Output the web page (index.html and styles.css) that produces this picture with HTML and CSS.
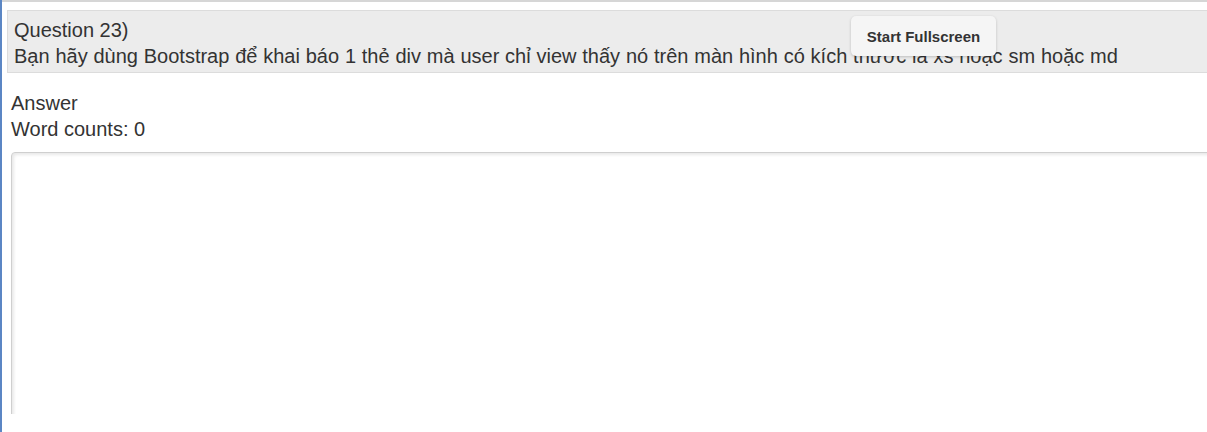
FILE: index.html
```html
<!DOCTYPE html>
<html lang="vi">
<head>
<meta charset="utf-8">
<title>Question 23</title>
<link rel="stylesheet" href="styles.css">
</head>
<body>
<div class="frame">
  <div class="inner">
    <div class="question">
      <div>Question 23)</div>
      <div class="q-text">Bạn hãy dùng Bootstrap để khai báo 1 thẻ div mà user chỉ view thấy nó trên màn hình có kích thước là xs hoặc sm hoặc md</div>
    </div>
    <div class="answer">
      <div>Answer</div>
      <div>Word counts: <span class="count">0</span></div>
      <textarea class="area"></textarea>
    </div>
  </div>
  <button class="fs-btn" type="button">Start Fullscreen</button>
</div>
</body>
</html>
```

FILE: styles.css
```css
html, body {
  margin: 0;
  padding: 0;
  height: 100%;
  background: #fff;
  overflow: hidden;
}
body {
  border-left: 2px solid #5b86c4;
  box-sizing: border-box;
  font-family: "Liberation Sans", Arial, sans-serif;
  font-size: 20px;
  line-height: 26px;
  color: #333;
}
.frame {
  position: relative;
  height: 412px;
  overflow: hidden;
  border-top: 2px solid #d6d6d6;
  width: 1260px;
}
.inner {
  padding-top: 8px;
}
.question {
  margin-left: 5px;
  background: #ececec;
  border: 1px solid #dcdcdc;
  padding: 6px 6px 3px;
}
.q-text {
  word-spacing: 0.25px;
}
.answer {
  padding: 17px 0 0 9px;
}
.area {
  display: block;
  margin-top: 10px;
  width: 1240px;
  height: 400px;
  box-sizing: border-box;
  border: 1px solid #cfcfcf;
  border-radius: 4px;
  box-shadow: inset 2px 2px 3px rgba(0, 0, 0, 0.09);
  background: #fff;
  resize: none;
  font: inherit;
}
.fs-btn {
  position: absolute;
  left: 849px;
  top: 14px;
  width: 145px;
  height: 40px;
  border: none;
  border-radius: 5px;
  background: #f5f5f5;
  box-shadow: 0 1px 3px rgba(0, 0, 0, 0.2);
  font-family: "Liberation Sans", Arial, sans-serif;
  font-weight: bold;
  font-size: 15px;
  color: #333;
  padding: 0;
  cursor: pointer;
}
```
